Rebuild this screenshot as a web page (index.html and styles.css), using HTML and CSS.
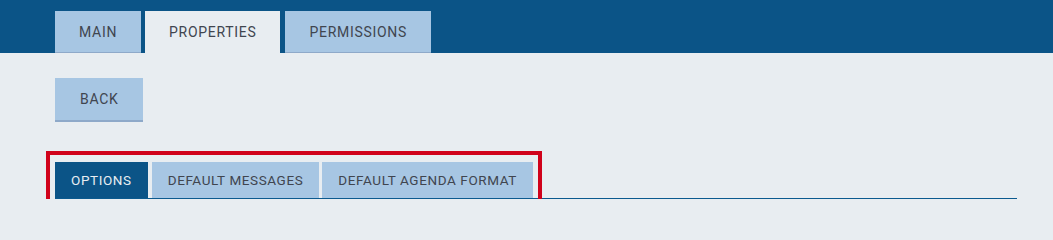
FILE: index.html
```html
<!DOCTYPE html>
<html lang="en">
<head>
<meta charset="utf-8">
<title>Properties</title>
<link rel="stylesheet" href="styles.css">
</head>
<body>
<header class="topbar">
  <nav class="main-tabs">
    <a class="main-tab">MAIN</a>
    <a class="main-tab main-tab--active">PROPERTIES</a>
    <a class="main-tab main-tab--wide">PERMISSIONS</a>
  </nav>
</header>
<main class="content">
  <button class="back-btn">BACK</button>
  <div class="sub-tabs-row">
    <div class="sub-tabs">
      <a class="sub-tab sub-tab--active">OPTIONS</a>
      <a class="sub-tab">DEFAULT MESSAGES</a>
      <a class="sub-tab">DEFAULT AGENDA FORMAT</a>
    </div>
  </div>
</main>
</body>
</html>
```
FILE: styles.css
```css
* { box-sizing: border-box; }
html, body { margin: 0; padding: 0; }
body {
  background: #e8edf1;
  font-family: Roboto, "Liberation Sans", sans-serif;
  font-size: 14px;
  color: #40454f;
}
.topbar {
  background: #0b5487;
  height: 53px;
  padding: 11px 0 0 55px;
}
.main-tabs {
  display: flex;
  gap: 4px;
  height: 42px;
}
.main-tab {
  display: flex;
  align-items: center;
  padding: 0 24px;
  height: 42px;
  background: #a7c6e3;
  border-bottom: 1px solid #8ea9c9;
  letter-spacing: 0.7px;
  color: #40454f;
}
.main-tab--wide { margin-left: 1px; }
.main-tab--active {
  background: #e8edf1;
  border-bottom: none;
}
.content {
  padding: 25px 36px 0 55px;
}
.back-btn {
  display: block;
  height: 44px;
  padding: 0 25px;
  border: none;
  border-bottom: 2px solid #8ea9c9;
  background: #a7c6e3;
  font-family: inherit;
  font-size: 14px;
  letter-spacing: 0.7px;
  color: #40454f;
}
.sub-tabs-row {
  margin-top: 40px;
  border-bottom: 1px solid #0b5a8f;
}
.sub-tabs {
  position: relative;
  display: inline-flex;
  gap: 3px;
  vertical-align: bottom;
}
.sub-tabs::after {
  content: "";
  position: absolute;
  top: -11px;
  bottom: -11px;
  left: -9px;
  right: -9px;
  border: 4px solid #d0021b;
  pointer-events: none;
}
.sub-tab {
  display: flex;
  align-items: center;
  height: 36px;
  padding: 0 16px;
  background: #a7c6e3;
  font-size: 13.5px;
  letter-spacing: 0.6px;
  color: #40454f;
}
.sub-tab--active {
  background: #0b5487;
  color: #e8edf1;
  margin-right: 1px;
}
```
